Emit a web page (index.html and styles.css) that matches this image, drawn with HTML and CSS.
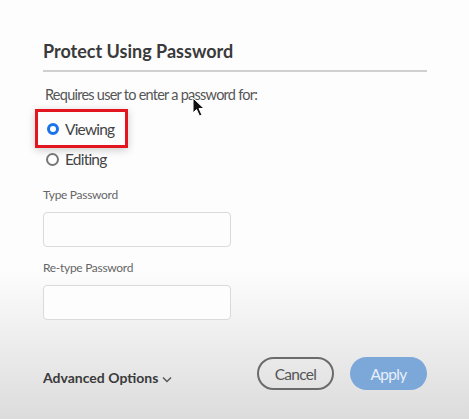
FILE: index.html
```html
<!DOCTYPE html>
<html>

<head>
    <title>Protect Using Password</title>
    <link rel="stylesheet" href="styles.css">
</head>

<body>
    <div class="dialog">
        <h2 class="title">Protect Using Password</h2>
        <p class="intro">Requires user to enter a password for:</p>

        <div class="options">
            <div class="highlight">
                <label class="radio"><span class="dot checked"></span>Viewing</label>
            </div>
            <label class="radio editing"><span class="dot"></span>Editing</label>
        </div>

        <label class="field-label">Type Password</label>
        <div class="field"></div>

        <label class="field-label">Re-type Password</label>
        <div class="field"></div>

        <div class="footer">
            <span class="advanced">Advanced Options
                <svg class="chevron" width="10" height="7" viewBox="0 0 10 7">
                    <path d="M1 1.5 L5 5.5 L9 1.5" fill="none" stroke="#555" stroke-width="1.4"/>
                </svg>
            </span>
            <div class="buttons">
                <button class="btn cancel">Cancel</button>
                <button class="btn apply">Apply</button>
            </div>
        </div>

        <!-- mouse pointer from the recording -->
        <svg class="pointer" width="14" height="21" viewBox="0 0 14 21">
            <path d="M1 1 L1 16 L4.5 12.5 L7.5 19 L10 18 L7 11.5 L12 11.5 Z" fill="#111" stroke="#fff" stroke-width="1"/>
        </svg>
    </div>
</body>
</html>
```

FILE: styles.css
```css
/* page */
body {
    margin: 0;
    padding: 0;
    font-family: Lato, "Noto Sans", sans-serif;
    background: linear-gradient(to bottom, #fdfdfe 0px, #fdfdfe 270px, #dcdcdd 419px);
    height: 419px;
    overflow: hidden;
}

.dialog {
    position: relative;
    padding: 39px 42px 0 43px;
}

.title {
    margin: 0;
    font-size: 18px;
    line-height: 24px;
    font-weight: bold;
    color: #3a3a3a;
    padding-bottom: 7px;
    border-bottom: 2px solid #cfcfd0;
}

.intro {
    margin: 13px 0 0 2px;
    font-size: 14.5px;
    letter-spacing: -0.75px;
    line-height: 20px;
    color: #555;
}

/* radio options */
.options {
    margin-top: 4px;
}

.highlight {
    width: 81px;
    height: 33px;
    margin-left: -8px;
    border: 3px solid #e3161f;
    box-shadow: 0 2px 8px rgba(0, 0, 0, 0.2);
    display: flex;
    align-items: center;
    padding-left: 6px;
}

.radio {
    display: flex;
    align-items: center;
    font-size: 15.5px;
    letter-spacing: -0.8px;
    color: #444;
}

.editing {
    height: 22px;
}

.dot {
    width: 9px;
    height: 9px;
    border: 2px solid #777;
    border-radius: 50%;
    margin-right: 6px;
    margin-left: 3px;
    background: #fff;
}

.dot.checked {
    border: 3.5px solid #1a73e8;
    width: 6px;
    height: 6px;
}

/* text fields */
.field-label {
    display: block;
    margin-top: 17px;
    font-size: 12px;
    letter-spacing: -0.3px;
    line-height: 16px;
    color: #666;
}

.field {
    width: 186px;
    height: 33px;
    margin-top: 9px;
    border: 1px solid #dadada;
    border-radius: 4px;
    background: #fdfdfd;
}

.field + .field-label {
    margin-top: 13px;
}

/* footer */
.footer {
    display: flex;
    justify-content: space-between;
    align-items: center;
    margin-top: 37px;
}

.advanced {
    font-size: 14px;
    font-weight: bold;
    color: #3a3a3a;
    margin-top: 8px;
}

.chevron {
    vertical-align: middle;
}

.buttons {
    display: flex;
    gap: 16px;
}

.btn {
    height: 33px;
    padding: 0;
    border-radius: 17px;
    font-family: Lato, "Noto Sans", sans-serif;
    font-size: 15.5px;
    letter-spacing: -0.7px;
    cursor: pointer;
}

.cancel {
    width: 77px;
    border: 2px solid #6b6b6b;
    background: transparent;
    color: #555;
}

.apply {
    width: 77px;
    border: none;
    background: #7ca8d9;
    color: #e8eff9;
}

.pointer {
    position: absolute;
    left: 192px;
    top: 97px;
}
```
